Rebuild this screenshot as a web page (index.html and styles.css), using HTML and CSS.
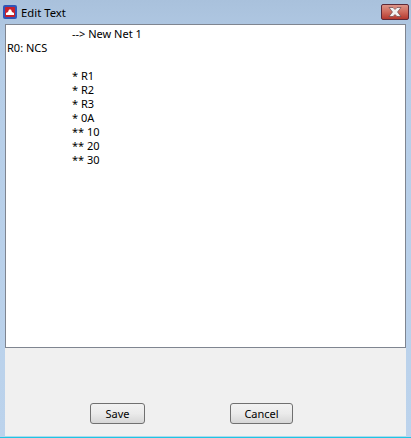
FILE: index.html
```html
<!DOCTYPE html>
<html>
    <head>
        <link rel="stylesheet" href="styles.css">
    </head>
    <body>
        <div class="window">
            <div class="titlebar">
                <svg class="appicon" width="14" height="14" viewBox="0 0 14 14">
                    <rect width="14" height="14" rx="2" fill="#2f55b8"/>
                    <rect x="2" y="2" width="10" height="10" rx="1" fill="#c8202c"/>
                    <path d="M3 10 L3 8 L5 7 L6 4.5 L8 4.5 L9 7 L11 8 L11 10 Z" fill="#fff"/>
                </svg>
                <span class="title">Edit Text</span>
                <div class="close">
                    <svg width="16" height="10" viewBox="0 0 16 10">
                        <path d="M2 0.5 L6 0.5 L8 2.5 L10 0.5 L14 0.5 L10.5 5 L14 9.5 L10 9.5 L8 7.5 L6 9.5 L2 9.5 L5.5 5 Z" fill="#f2f2f2" stroke="#5a3a40" stroke-width="0.6"/>
                    </svg>
                </div>
            </div>
            <div class="body">
                <div class="text">
                    <div class="line tab">--&gt; New Net 1</div>
                    <div class="line">R0: NCS</div>
                    <div class="line"></div>
                    <div class="line tab">* R1</div>
                    <div class="line tab">* R2</div>
                    <div class="line tab">* R3</div>
                    <div class="line tab">* 0A</div>
                    <div class="line tab">** 10</div>
                    <div class="line tab">** 20</div>
                    <div class="line tab">** 30</div>
                </div>
                <div class="buttons">
                    <button class="btn save">Save</button>
                    <button class="btn cancel">Cancel</button>
                </div>
            </div>
        </div>
    </body>
</html>
```

FILE: styles.css
```css
html, body {
    margin: 0;
    padding: 0;
}
body {
    width: 411px;
    height: 438px;
    overflow: hidden;
    font-family: "Noto Sans", "Liberation Sans", sans-serif;
    font-size: 11px;
    color: #000;
}
.window {
    width: 411px;
    height: 438px;
    box-sizing: border-box;
    display: flex;
    flex-direction: column;
    padding: 0 5px;
    border-bottom: 1px solid #1fc4e4;
    background: linear-gradient(#a9c1dc, #b6cee8 60px, #bcd3ec);
}
.titlebar {
    height: 24px;
    flex: none;
    display: flex;
    align-items: center;
    position: relative;
}
.appicon {
    margin: 0 4px 0 -2px;
}
.title {
    font-size: 11.3px;
}
.close {
    position: absolute;
    right: -3px;
    top: 4px;
    width: 26px;
    height: 14px;
    display: flex;
    align-items: center;
    justify-content: center;
    border: 1px solid #5d2a38;
    border-radius: 2px;
    background: linear-gradient(#dc9488, #cf6a5c 50%, #b5392f);
}
.body {
    flex: 1;
    display: flex;
    flex-direction: column;
    background: #f0f0f0;
    border-bottom: 1px solid #a8dcec;
}
.text {
    height: 318px;
    flex: none;
    background: #fff;
    border: 1px solid #7f8590;
    padding: 2px 1px;
}
.line {
    height: 14px;
    line-height: 14px;
    white-space: pre;
}
.tab {
    padding-left: 65px;
}
.buttons {
    flex: 1;
    display: flex;
    padding: 55px 0 0 85px;
    gap: 85px;
}
.btn {
    height: 21px;
    padding: 0;
    font-family: inherit;
    font-size: 11px;
    border: 1px solid #707070;
    border-radius: 3px;
    background: linear-gradient(#f2f2f2, #ebebeb 50%, #d6d6d6);
}
.save {
    width: 55px;
}
.cancel {
    width: 63px;
}
```
